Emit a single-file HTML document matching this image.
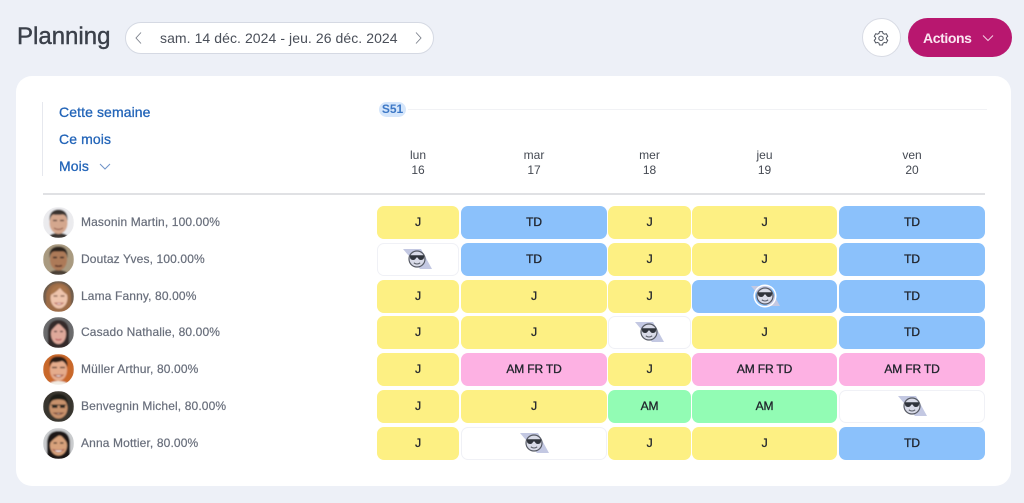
<!DOCTYPE html>
<html lang="fr">
<head>
<meta charset="utf-8">
<title>Planning</title>
<style>
html,body{margin:0;padding:0}
body{width:1024px;height:503px;overflow:hidden;background:#edf0f7;position:relative;font-family:"Liberation Sans",sans-serif;color:#3a3f49}
.a{position:absolute}
.t{position:absolute;white-space:nowrap;line-height:16px}
h1{position:absolute;left:17px;top:21px;margin:0;font-size:24px;line-height:32px;font-weight:400;color:#3b404a;letter-spacing:0;-webkit-text-stroke:.4px #3b404a}
.pill{position:absolute;left:125px;top:22px;width:307px;height:30px;background:#fff;border:1px solid #d5d9e3;border-radius:16px}
.card{position:absolute;left:16px;top:76px;width:995px;height:410px;background:#fff;border-radius:16px}
.link{position:absolute;left:59px;color:#2264b8;font-size:14px;line-height:18px;-webkit-text-stroke:.3px #2264b8;letter-spacing:.1px}
.day{position:absolute;text-align:center;font-size:12px;line-height:15.5px;color:#444952;top:147.5px}
.name{position:absolute;left:81px;font-size:12px;line-height:16px;color:#686e7b;white-space:nowrap;letter-spacing:.13px;-webkit-text-stroke:.2px #686e7b}
.c{position:absolute;height:33px;border-radius:7px;text-align:center;line-height:32px;font-size:12px;color:#20242c;-webkit-text-stroke:.3px #20242c;box-sizing:border-box;letter-spacing:-.15px}
.j{background:#fdf083}
.b{background:#8bc1fb}
.p{background:#fdb1e3}
.g{background:#92fcb4}
.w{background:#fff;border:1px solid #f0f1f6}
.c1{left:377px;width:82px}
.c2{left:461px;width:146px}
.c3{left:608px;width:83px}
.c4{left:692px;width:145px}
.c5{left:839px;width:146px}
.r1{top:206px}.r2{top:243px}.r3{top:280px}.r4{top:316px}.r5{top:353px}.r6{top:390px}.r7{top:427px}
svg.av{position:absolute;left:43px;width:31px;height:31px}
svg.ic{position:absolute;width:31px;height:26px}
</style>
</head>
<body>
<svg width="0" height="0" style="position:absolute">
  <defs>
    <clipPath id="cl"><circle cx="15.5" cy="15.5" r="15.5"/></clipPath>
    <filter id="bl"><feGaussianBlur stdDeviation=".7"/></filter>
    <symbol id="sun" viewBox="0 0 31 26">
      <path d="M1 2H19L30 22H18Z" fill="#c3c8e2"/>
      <circle cx="15" cy="12" r="8" fill="#d9dbe8" stroke="#565a64" stroke-width="1.2"/>
      <path d="M8 8.300H22V10.300Q21.800 13 19 13Q16.400 13 15.900 10.600H14.100Q13.600 13 11 13Q8.200 13 8 10.300Z" fill="#30343c"/>
      <path d="M11.800 15.800Q15 18.200 18.200 15.800" fill="none" stroke="#565a64" stroke-width="1"/>
    </symbol>
  </defs>
</svg>

<h1>Planning</h1>
<div class="pill"></div>
<svg class="a" style="left:134px;top:31px" width="9" height="14" viewBox="0 0 9 14"><path d="M7 1.500 2 7l5 5.500" fill="none" stroke="#7a7f8a" stroke-width=".9"/></svg>
<div class="t" style="left:160px;top:30px;font-size:14px;color:#4a4f59;letter-spacing:.07px">sam. 14 déc. 2024 - jeu. 26 déc. 2024</div>
<svg class="a" style="left:414px;top:31px" width="9" height="14" viewBox="0 0 9 14"><path d="M2 1.500 7 7l-5 5.500" fill="none" stroke="#7a7f8a" stroke-width=".9"/></svg>

<div class="a" style="left:862px;top:18px;width:37px;height:37px;background:#fff;border:1px solid #d8dbe4;border-radius:50%"></div>
<svg class="a" style="left:873px;top:30px" width="16" height="16" viewBox="0 0 16 16" fill="none" stroke="#555a64" stroke-width="1.050"><path d="M6.500 1.600h3l.5 1.800 1.500.8 1.800-.5 1.400 2.600-1.300 1.400v1.200l1.300 1.400-1.400 2.600-1.800-.5-1.500.8-.5 1.800h-3l-.5-1.800-1.500-.8-1.800.5-1.400-2.600 1.300-1.400V7.700L1.300 6.300l1.400-2.600 1.800.5L6 3.400z"/><circle cx="8" cy="8.300" r="2.200"/></svg>
<div class="a" style="left:908px;top:18px;width:104px;height:39px;background:#b8176f;border-radius:20px"></div>
<div class="t" style="left:923px;top:30px;font-size:14px;font-weight:700;color:#fbe7f2;letter-spacing:-.4px">Actions</div>
<svg class="a" style="left:981px;top:33px" width="14" height="10" viewBox="0 0 14 10"><path d="M2 2.500 7 7.500 12 2.500" fill="none" stroke="#f3cfe2" stroke-width="1"/></svg>

<div class="card"></div>

<div class="a" style="left:42px;top:102px;width:1px;height:74px;background:#e6e8ee"></div>
<div class="link" style="top:103px">Cette semaine</div>
<div class="link" style="top:130px">Ce mois</div>
<div class="link" style="top:157px">Mois</div>
<svg class="a" style="left:98px;top:162px" width="14" height="10" viewBox="0 0 14 10"><path d="M2 2 7 7l5-5" fill="none" stroke="#6f93c8" stroke-width="1"/></svg>

<div class="a" style="left:379px;top:102px;width:27px;height:15px;background:#d5e6fb;border-radius:8px"></div>
<div class="t" style="left:379px;top:102px;width:27px;text-align:center;font-size:12px;line-height:15px;font-weight:700;color:#3d78c6">S51</div>
<div class="a" style="left:408px;top:109px;width:579px;height:1px;background:#f1f2f5"></div>

<div class="day" style="left:377px;width:82px">lun<br>16</div>
<div class="day" style="left:461px;width:146px">mar<br>17</div>
<div class="day" style="left:608px;width:83px">mer<br>18</div>
<div class="day" style="left:692px;width:145px">jeu<br>19</div>
<div class="day" style="left:839px;width:146px">ven<br>20</div>
<div class="a" style="left:43px;top:193px;width:942px;height:2px;background:#e0e1e4"></div>

<!-- Avatars -->
<svg class="av" style="top:207px" viewBox="0 0 31 31"><g clip-path="url(#cl)"><g filter="url(#bl)"><rect width="31" height="31" fill="#ebebee"/><path d="M5 31Q7 26 15 26Q24 26 26 31Z" fill="#3a3532"/><ellipse cx="15.500" cy="16" rx="9" ry="11" fill="#d4a78e"/><path d="M6.500 14Q5.500 3 15.500 2.500Q25.500 3 24.500 14Q23.500 8 20 7.500Q14 8 10 7.500Q7.500 9 6.500 14Z" fill="#37312e"/><path d="M10 13.500h4M17 13.500h4" stroke="#4a3229" stroke-width="1.300"/><path d="M11 21Q15.500 24 20 21" stroke="#96604f" stroke-width="1.200" fill="none"/></g></g></svg>
<svg class="av" style="top:244px" viewBox="0 0 31 31"><g clip-path="url(#cl)"><g filter="url(#bl)"><rect width="31" height="31" fill="#a99a80"/><path d="M4 31Q8 26 15 26Q23 26 27 31Z" fill="#4b4034"/><ellipse cx="15.500" cy="15.500" rx="8.500" ry="11" fill="#ad7a58"/><path d="M6.500 14Q5.500 2.500 15.500 2.500Q25.500 2.500 24.500 14Q23.500 8 20 7.500H11Q7.500 8 6.500 14Z" fill="#2a231e"/><path d="M10 13.500h4M17 13.500h4" stroke="#33241c" stroke-width="1.600"/><path d="M12 21.500Q15.500 23 19 21.500" stroke="#5c3226" stroke-width="1.500" fill="none"/></g></g></svg>
<svg class="av" style="top:281px" viewBox="0 0 31 31"><g clip-path="url(#cl)"><g filter="url(#bl)"><rect width="31" height="31" fill="#6d5c4c"/><path d="M3 31V13Q6 2 16 2Q27 3 28 15V31Z" fill="#9d6c46"/><ellipse cx="16" cy="17" rx="8.500" ry="10.500" fill="#eec4ac"/><path d="M7.500 14Q12 12 17 7Q20 11 24.500 14Q24.500 5 16 4Q7.500 5 7.500 14Z" fill="#a9754c"/><path d="M10.500 15h4M17.500 15h4" stroke="#7a5242" stroke-width="1.200"/><path d="M12 22Q16 25.500 20 22Z" fill="#fff" stroke="#bd756a"/></g></g></svg>
<svg class="av" style="top:317px" viewBox="0 0 31 31"><g clip-path="url(#cl)"><g filter="url(#bl)"><rect width="31" height="31" fill="#6b6a6c"/><path d="M5 31V14Q6 3 15.500 3Q25 3 26 14V31Z" fill="#352c2b"/><ellipse cx="15.500" cy="17" rx="7.500" ry="10" fill="#dfa99b"/><path d="M8 14Q12 9 15.500 6.500Q19 9 23 14Q23 5 15.500 5Q8 5 8 14Z" fill="#352c2b"/><path d="M11 14.500h3M17 14.500h3" stroke="#4a3330" stroke-width="1.200"/><path d="M12.500 22Q15.500 24 18.500 22" stroke="#b7545b" stroke-width="1.200" fill="none"/></g></g></svg>
<svg class="av" style="top:354px" viewBox="0 0 31 31"><g clip-path="url(#cl)"><g filter="url(#bl)"><rect width="31" height="31" fill="#c9672a"/><path d="M5 31Q8 27 15 27Q23 27 26 31Z" fill="#f1ece4"/><ellipse cx="15.500" cy="16" rx="8.500" ry="11" fill="#e5ac8c"/><path d="M6.500 13Q5.500 2.500 15 2.500Q25.500 2.500 24.500 13Q22 8 19 7Q13 9 10 8Q8 9 6.500 13Z" fill="#2b1d18"/><path d="M9 13.500h5M17 13.500h5" stroke="#3d2720" stroke-width="1.300"/><path d="M11 21Q15.500 25 20 21Z" fill="#fff" stroke="#a95d4c"/></g></g></svg>
<svg class="av" style="top:391px" viewBox="0 0 31 31"><g clip-path="url(#cl)"><g filter="url(#bl)"><rect width="31" height="31" fill="#39352f"/><ellipse cx="15.500" cy="17" rx="9" ry="10.500" fill="#c8926c"/><path d="M6 14Q6 3 15.500 3Q25 3 25 14Q23 8 15.500 8.500Q8 8 6 14Z" fill="#1e1b19"/><path d="M8 13.500h15v1H8ZM9 13.500h5.500v3.500H9ZM17 13.500h5v3.500h-5Z" fill="#2a2623"/><path d="M11 22Q15.500 25 20 22Z" fill="#f0e0d0" stroke="#7c4b3a"/></g></g></svg>
<svg class="av" style="top:428px" viewBox="0 0 31 31"><g clip-path="url(#cl)"><g filter="url(#bl)"><rect width="31" height="31" fill="#c9cbcd"/><path d="M4 31V14Q5 3 15.500 3Q26 3 27 14V31Z" fill="#1c1614"/><ellipse cx="15.500" cy="17.500" rx="8.500" ry="10" fill="#d8a27c"/><path d="M7 15Q11 10 17 7Q21 10 24 15Q25 5 15.500 5Q6 5 7 15Z" fill="#1c1614"/><path d="M10.500 15h3.500M17 15h3.500" stroke="#2c1d17" stroke-width="1.300"/><path d="M10 21.500Q15.500 27 21 21.500Q15.500 23 10 21.500Z" fill="#fff" stroke="#a75b4e" stroke-width=".8"/></g></g></svg>

<div class="name" style="top:214px">Masonin Martin, 100.00%</div>
<div class="name" style="top:251px">Doutaz Yves, 100.00%</div>
<div class="name" style="top:288px">Lama Fanny, 80.00%</div>
<div class="name" style="top:324px">Casado Nathalie, 80.00%</div>
<div class="name" style="top:361px">Müller Arthur, 80.00%</div>
<div class="name" style="top:398px">Benvegnin Michel, 80.00%</div>
<div class="name" style="top:435px">Anna Mottier, 80.00%</div>

<!-- Row 1 -->
<div class="c j c1 r1">J</div><div class="c b c2 r1">TD</div><div class="c j c3 r1">J</div><div class="c j c4 r1">J</div><div class="c b c5 r1">TD</div>
<!-- Row 2 -->
<div class="c w c1 r2"></div><div class="c b c2 r2">TD</div><div class="c j c3 r2">J</div><div class="c j c4 r2">J</div><div class="c b c5 r2">TD</div>
<!-- Row 3 -->
<div class="c j c1 r3">J</div><div class="c j c2 r3">J</div><div class="c j c3 r3">J</div><div class="c b c4 r3"></div><div class="c b c5 r3">TD</div>
<!-- Row 4 -->
<div class="c j c1 r4">J</div><div class="c j c2 r4">J</div><div class="c w c3 r4"></div><div class="c j c4 r4">J</div><div class="c b c5 r4">TD</div>
<!-- Row 5 -->
<div class="c j c1 r5">J</div><div class="c p c2 r5">AM FR TD</div><div class="c j c3 r5">J</div><div class="c p c4 r5">AM FR TD</div><div class="c p c5 r5">AM FR TD</div>
<!-- Row 6 -->
<div class="c j c1 r6">J</div><div class="c j c2 r6">J</div><div class="c g c3 r6">AM</div><div class="c g c4 r6">AM</div><div class="c w c5 r6"></div>
<!-- Row 7 -->
<div class="c j c1 r7">J</div><div class="c w c2 r7"></div><div class="c j c3 r7">J</div><div class="c j c4 r7">J</div><div class="c b c5 r7">TD</div>

<svg class="ic" style="left:402px;top:247px"><use href="#sun"/></svg>
<svg class="ic" style="left:750px;top:284px"><use href="#sun"/></svg>
<div class="a" style="left:755px;top:286px;width:20px;height:20px;border-radius:50%;box-shadow:0 0 0 1.500px #fff"></div>
<svg class="ic" style="left:634px;top:320px"><use href="#sun"/></svg>
<svg class="ic" style="left:897px;top:394px"><use href="#sun"/></svg>
<svg class="ic" style="left:519px;top:431px"><use href="#sun"/></svg>
</body>
</html>
